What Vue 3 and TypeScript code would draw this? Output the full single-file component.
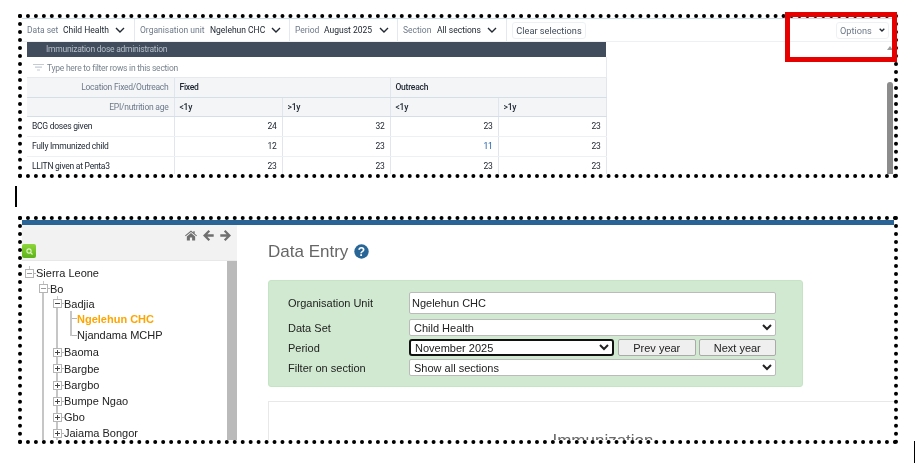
<template>
  <div class="page">
    <!-- New data entry app capture -->
    <section class="shot shot-top">
      <div class="capture">
        <div class="toolbar">
          <div v-for="sel in selections" :key="sel.label" class="sel" :style="{ width: sel.width + 'px' }">
            <span class="sel-label" :style="{ width: sel.labelWidth + 'px' }">{{ sel.label }}</span>
            <span class="sel-value" :style="{ width: sel.valueWidth + 'px' }">{{ sel.value }}</span>
            <svg class="chev" width="10" height="6" viewBox="0 0 10 6"><path d="M1 1l4 4 4-4" fill="none" stroke="#212934" stroke-width="1.4" /></svg>
          </div>
          <button class="tool-btn clear">Clear selections</button>
          <button class="tool-btn options">
            Options
            <svg width="6" height="4" viewBox="0 0 6 4"><path d="M.7.7L3 3l2.300-2.300" fill="none" stroke="#212934" stroke-width="1.300" /></svg>
          </button>
        </div>
        <table class="grid">
          <colgroup>
            <col class="col-label" />
            <col v-for="n in 4" :key="n" class="col-val" />
          </colgroup>
          <tbody>
            <tr class="title-row"><td colspan="5">Immunization dose administration</td></tr>
            <tr class="filter-row">
              <td colspan="5">
                <svg width="11" height="7" viewBox="0 0 11 7"><path d="M0 .5h11M2 3.200h7M4 6h3" stroke="#c4cbd3" stroke-width="1.200" /></svg>
                <span>Type here to filter rows in this section</span>
              </td>
            </tr>
            <tr class="head-row">
              <th class="head-label">Location Fixed/Outreach</th>
              <th colspan="2">Fixed</th>
              <th colspan="2">Outreach</th>
            </tr>
            <tr class="head-row head-row-ages">
              <th class="head-label">EPI/nutrition age</th>
              <th v-for="(age, i) in ages" :key="i">{{ age }}</th>
            </tr>
            <tr v-for="row in rows" :key="row.name" class="data-row">
              <td class="row-name">{{ row.name }}</td>
              <td v-for="(v, i) in row.values" :key="i" class="num" :class="{ blue: v === 11 }">{{ v }}</td>
            </tr>
          </tbody>
        </table>
      </div>
      <div class="scroll-arrow"></div>
      <div class="scroll-thumb"></div>
    </section>

    <div class="caret"></div>

    <!-- Legacy data entry app capture -->
    <section class="shot shot-bottom">
      <div class="blue-bar"></div>
      <div class="legacy">
        <aside class="side">
          <div class="side-head">
            <div class="nav-icons">
              <svg width="12" height="11" viewBox="0 0 13 11"><path d="M6.500 0L0 5.600l.7.8L6.500 1.600l5.800 4.800.7-.8L10.500 3.500V.8H9v1.500zM2 6.500V11h3.300V7.600h2.400V11H11V6.500L6.500 2.800z" fill="#6f6f6f" /></svg>
              <svg width="11" height="11" viewBox="0 0 11 11"><path d="M5.500 0L0 5.500 5.500 11l1.600-1.600-2.700-2.700h6.300V4.300H4.400l2.700-2.700z" fill="#6f6f6f" /></svg>
              <svg width="11" height="11" viewBox="0 0 11 11"><path d="M5.500 0L11 5.500 5.500 11 3.900 9.400l2.700-2.700H.3V4.300h6.300L3.900 1.600z" fill="#6f6f6f" /></svg>
            </div>
            <button class="search-btn">
              <svg width="7" height="7" viewBox="0 0 7 7"><circle cx="3" cy="3" r="2.100" fill="none" stroke="#dff5c8" stroke-width="1.100" /><path d="M4.600 4.600L6.500 6.500" stroke="#dff5c8" stroke-width="1.200" /></svg>
            </button>
          </div>
          <div class="tree">
            <div class="tree-line line-bo"></div>
            <div class="tree-line line-badjia"></div>
            <div class="tree-line line-leaf"></div>
            <div
              v-for="node in tree"
              :key="node.label"
              class="node"
              :class="{ selected: node.selected, leaf: !node.icon, soft: node.soft }"
              :style="{ paddingLeft: node.indent + 'px', height: node.h + 'px' }"
            >
              <span v-if="node.icon" class="toggle">
                <i></i><i v-if="node.icon === 'plus'" class="v"></i>
              </span>
              <span v-else class="leaf-tick"></span>
              <span class="tick"></span>
              <span>{{ node.label }}</span>
            </div>
            <div class="tree-scroll"></div>
          </div>
        </aside>
        <main class="main">
          <h1 class="page-title">
            Data Entry
            <svg width="15" height="15" viewBox="0 0 15 15">
              <circle cx="7.500" cy="7.500" r="7.200" fill="#276696" />
              <text x="7.500" y="11.500" text-anchor="middle">?</text>
            </svg>
          </h1>
          <div class="selection-box">
            <div class="form-row first">
              <label>Organisation Unit</label>
              <input class="field" value="Ngelehun CHC" readonly />
            </div>
            <div class="form-row">
              <label>Data Set</label>
              <select class="field pick"><option>Child Health</option></select>
            </div>
            <div class="form-row">
              <label>Period</label>
              <select class="field pick focus"><option>November 2025</option></select>
              <button class="year-btn">Prev year</button>
              <button class="year-btn">Next year</button>
            </div>
            <div class="form-row">
              <label>Filter on section</label>
              <select class="field pick"><option>Show all sections</option></select>
            </div>
          </div>
          <div class="form-card"><div class="form-card-title">Immunization</div></div>
        </main>
      </div>
    </section>

    <div class="caret-end"></div>
    <div class="red-box"></div>
  </div>
</template>

<script setup lang="ts">
interface TreeNode {
  label: string
  indent: number
  h: number
  icon?: 'plus' | 'minus'
  selected?: boolean
  soft?: boolean
}

const selections = [
  { label: 'Data set', labelWidth: 36, value: 'Child Health', valueWidth: 52, width: 113 },
  { label: 'Organisation unit', labelWidth: 70, value: 'Ngelehun CHC', valueWidth: 61, width: 155 },
  { label: 'Period', labelWidth: 29, value: 'August 2025', valueWidth: 55, width: 108 },
  { label: 'Section', labelWidth: 34, value: 'All sections', valueWidth: 50, width: 109 }
]

const ages = ['<1y', '>1y', '<1y', '>1y']

const rows = [
  { name: 'BCG doses given', values: [24, 32, 23, 23] },
  { name: 'Fully Immunized child', values: [12, 23, 11, 23] },
  { name: 'LLITN given at Penta3', values: [23, 23, 23, 23] }
]

const tree: TreeNode[] = [
  { label: 'Sierra Leone', indent: 3, h: 16, icon: 'minus', soft: true },
  { label: 'Bo', indent: 17, h: 15, icon: 'minus', soft: true },
  { label: 'Badjia', indent: 31, h: 15, icon: 'minus' },
  { label: 'Ngelehun CHC', indent: 48, h: 15, selected: true },
  { label: 'Njandama MCHP', indent: 48, h: 18 },
  { label: 'Baoma', indent: 31, h: 16, icon: 'plus' },
  { label: 'Bargbe', indent: 31, h: 17, icon: 'plus' },
  { label: 'Bargbo', indent: 31, h: 16, icon: 'plus' },
  { label: 'Bumpe Ngao', indent: 31, h: 16, icon: 'plus' },
  { label: 'Gbo', indent: 31, h: 16, icon: 'plus' },
  { label: 'Jaiama Bongor', indent: 31, h: 16, icon: 'plus' }
]
</script>

<style scoped>
.page {
  position: relative;
  width: 918px;
  height: 463px;
  padding: 14px 0 0 18px;
  box-sizing: border-box;
  overflow: hidden;
  background: #fff;
}

.shot {
  position: relative;
  width: 880px;
  box-sizing: border-box;
  border: 4px dotted #000;
  overflow: hidden;
}

.shot-top {
  height: 164px;
  font-family: Roboto, sans-serif;
  font-size: 8.500px;
  color: #212934;
}

.shot-bottom {
  height: 228px;
  font-family: "Liberation Sans", sans-serif;
  font-size: 11px;
  color: #222;
}

/* the captures are scaled-down screenshots, so they read slightly soft */
.capture {
  filter: blur(0.3px);
}

.legacy {
  display: flex;
  height: 215px;
  filter: blur(0.2px);
}

.caret {
  width: 2px;
  height: 21px;
  margin: 8px 0 9px -3px;
  background: #000;
}

.caret-end {
  position: absolute;
  left: 914px;
  top: 441px;
  width: 1px;
  height: 22px;
  background: #000;
}

.red-box {
  position: absolute;
  left: 785px;
  top: 12px;
  width: 112px;
  height: 50px;
  box-sizing: border-box;
  border: 5px solid #e60000;
}

/* Top capture */
.toolbar {
  display: flex;
  align-items: stretch;
  height: 24px;
  box-sizing: border-box;
  border-top: 1px solid #c9dcea;
  border-bottom: 1px solid #eef1f4;
}

.sel {
  display: flex;
  align-items: center;
  box-sizing: border-box;
  padding-left: 5px;
  border-right: 1px solid #e3e9ef;
  white-space: nowrap;
}

.sel-label {
  flex: none;
  color: #6e7a8a;
}

.sel-value {
  flex: none;
}

.chev {
  flex: none;
}

.tool-btn {
  align-self: center;
  height: 17px;
  padding: 0 3px;
  border: 1px solid #eef1f4;
  border-radius: 3px;
  background: #fff;
  color: #404b5a;
  font: 9.200px Roboto, sans-serif;
}

.clear {
  width: 74px;
  margin-left: 5px;
}

.options {
  display: flex;
  align-items: center;
  justify-content: space-between;
  width: 53px;
  margin-left: auto;
  margin-right: 5px;
  padding: 0 3px;
  color: #6e7a8a;
}

.grid {
  width: 579px;
  margin-left: 5px;
  border-collapse: collapse;
  table-layout: fixed;
  font-size: 8.500px;
  letter-spacing: -0.25px;
}

.col-label {
  width: 147px;
}

.col-val {
  width: 108px;
}

.title-row td {
  height: 15px;
  padding: 0 0 2px 19px;
  box-sizing: border-box;
  background: #414d5c;
  color: #b6bfca;
}

.filter-row td {
  height: 20px;
  padding: 2px 0 0 6px;
  box-sizing: border-box;
  border-bottom: 1px solid #e6eaee;
  border-right: 1px solid #e6eaee;
  color: #79848f;
}

.filter-row span {
  margin-left: 3px;
}

.head-row th {
  height: 20px;
  padding: 0 5px;
  box-sizing: border-box;
  background: #f3f5f7;
  border-bottom: 1px solid #d5dfe8;
  border-right: 1px solid #e0e6ec;
  color: #212934;
  font-weight: 500;
  text-align: left;
}

.head-row-ages th {
  height: 19px;
}

.head-row th.head-label {
  padding-right: 5px;
  color: #6e7a8a;
  font-weight: 400;
  text-align: right;
}

.data-row td {
  height: 20px;
  padding: 0 5px 1px;
  box-sizing: border-box;
  border-bottom: 1px solid #eef1f4;
  border-right: 1px solid #e0e6ec;
}

.num {
  text-align: right;
}

.num.blue {
  color: #1a5ca8;
}

.scroll-arrow {
  position: absolute;
  right: 1px;
  top: 28px;
  width: 0;
  height: 0;
  border-left: 3px solid transparent;
  border-right: 3px solid transparent;
  border-bottom: 4px solid #9c9c9c;
}

.scroll-thumb {
  position: absolute;
  right: 1px;
  top: 64px;
  width: 6px;
  height: 92px;
  border-radius: 3px 3px 0 0;
  background: #8c8c8c;
}

/* Bottom capture */
.blue-bar {
  height: 5px;
  background: #2a6496;
}

.side {
  flex: none;
  width: 215px;
}

.side-head {
  position: relative;
  height: 36px;
  box-sizing: border-box;
  padding-top: 19px;
  border-bottom: 1px solid #e8e8e8;
  background: #f2f2f2;
}

.nav-icons {
  position: absolute;
  top: 5px;
  right: 6px;
  display: flex;
  gap: 6px;
}

.search-btn {
  display: flex;
  align-items: center;
  justify-content: center;
  width: 14px;
  height: 14px;
  margin-left: 0;
  padding: 0;
  border: 0;
  border-radius: 2px;
  background: linear-gradient(#8ed63a, #5cb21a);
}

.tree {
  position: relative;
  height: 179px;
  padding-top: 4px;
  box-sizing: border-box;
  overflow: hidden;
}

.tree-scroll {
  position: absolute;
  top: 0;
  right: 0;
  width: 10px;
  height: 100%;
  background: #bababa;
}

.tree-line {
  position: absolute;
  width: 1.500px;
  background: #c6c6c6;
}

.line-bo {
  left: 20px;
  top: 31px;
  bottom: 0;
}

.line-badjia {
  left: 34px;
  top: 46px;
  bottom: 0;
}

.line-leaf {
  left: 48px;
  top: 50px;
  height: 25px;
}

.node {
  display: flex;
  align-items: center;
  box-sizing: border-box;
  white-space: nowrap;
  font-size: 11px;
  color: #222;
}

.toggle {
  position: relative;
  flex: none;
  width: 7px;
  height: 7px;
  border: 1px solid #b5b5b5;
  background: #fff;
}

.toggle::before {
  content: "";
  position: absolute;
  left: 3px;
  top: -4px;
  width: 1px;
  height: 3px;
  background: #c6c6c6;
}

.toggle i {
  position: absolute;
  left: 1px;
  top: 3px;
  width: 5px;
  height: 1px;
  background: #444;
}

.toggle i.v {
  left: 3px;
  top: 1px;
  width: 1px;
  height: 5px;
}

.soft .toggle i {
  background: #9a9a9a;
}

.tick {
  flex: none;
  width: 2px;
  height: 1px;
  background: #b5b5b5;
}

.leaf-tick {
  flex: none;
  width: 7px;
  height: 1px;
  background: #b5b5b5;
}

.leaf .tick {
  display: none;
}

.selected {
  color: #ffa500;
  font-weight: 700;
}

.main {
  flex: 1;
  padding: 0 0 0 31px;
  min-width: 0;
}

.page-title {
  display: flex;
  align-items: center;
  gap: 6px;
  margin: 17px 0 19px;
  color: #666;
  font-size: 17px;
  font-weight: 400;
  line-height: 19px;
}

.page-title text {
  fill: #fff;
  font: 700 12px "Liberation Sans", sans-serif;
}

.selection-box {
  width: 535px;
  height: 107px;
  box-sizing: border-box;
  padding: 11px 0 0 19px;
  border: 1px solid #c4e4c4;
  border-radius: 3px;
  background: #d0e9d0;
}

.form-row {
  display: flex;
  align-items: center;
  gap: 3px;
  margin-bottom: 3px;
}

.form-row.first {
  margin-bottom: 5px;
}

.form-row label {
  flex: none;
  width: 118px;
  font-size: 11px;
}

.field {
  width: 367px;
  height: 17px;
  box-sizing: border-box;
  border: 1px solid #bbb;
  border-radius: 2px;
  background: #fff;
  color: #222;
  font: 11px "Liberation Sans", sans-serif;
}

input.field {
  height: 22px;
  padding: 0 2px;
  outline: none;
}

.focus {
  width: 205px;
  border: 2px solid #111;
  border-radius: 3px;
}

.year-btn {
  width: 77.500px;
  height: 17px;
  padding: 0;
  border: 1px solid #aaa;
  border-radius: 2px;
  background: #efefef;
  color: #222;
  font: 11px "Liberation Sans", sans-serif;
}

.focus + .year-btn {
  margin-left: 1px;
}

.form-card {
  width: 668px;
  height: 60px;
  margin-top: 14px;
  border: 1px solid #e8e8e8;
}

.form-card-title {
  margin-top: 29px;
  text-align: center;
  color: #666;
  font-size: 17px;
}
</style>
